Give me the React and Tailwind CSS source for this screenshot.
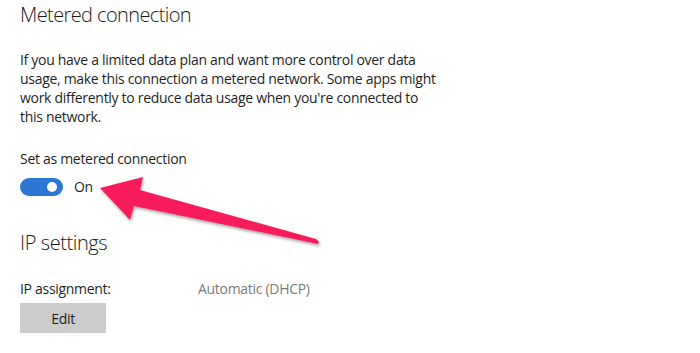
import React from "react";

// Windows 10 style settings pane: metered connection + IP settings, with a pink callout arrow.
const Arrow = () => (
  <svg className="absolute inset-0 pointer-events-none" width="700" height="353" viewBox="0 0 700 353">
    <defs>
      <filter id="sh" x="-10%" y="-20%" width="120%" height="160%">
        <feDropShadow dx="1" dy="2" stdDeviation="1.5" floodColor="#000" floodOpacity="0.35" />
      </filter>
    </defs>
    <path
      d="M100 188 L143 177 L140 190 L316 239 Q320 241 318 244 L134 206 L130 220 Z"
      fill="#f81d5b"
      filter="url(#sh)"
    />
  </svg>
);

export default function App() {
  return (
    <div className="relative w-[700px] h-[353px] bg-white overflow-hidden text-[#1f1f1f] font-['Open_Sans',sans-serif]">
      <div className="flex flex-col pl-5">
        <h1 className="mt-[1px] text-[20px] leading-[28px] font-light tracking-[-0.6px] text-[#1a1a1a]">Metered connection</h1>

        <p className="mt-[21px] text-[14px] leading-[19px] tracking-[-0.3px]">
          <span className="block">If you have a limited data plan and want more control over data</span>
          <span className="block">usage, make this connection a metered network. Some apps might</span>
          <span className="block">work differently to reduce data usage when you're connected to</span>
          <span className="block">this network.</span>
        </p>

        <div className="mt-[23px] text-[14px] leading-[19px] tracking-[-0.3px]">Set as metered connection</div>

        <div className="mt-[9px] flex items-center gap-[11px]">
          <div className="w-[43px] h-[18px] rounded-full bg-[#2b77d2] flex items-center justify-end pr-[6px]">
            <div className="w-[10px] h-[10px] rounded-full bg-white" />
          </div>
          <span className="text-[14px] leading-[19px] tracking-[-0.3px]">On</span>
        </div>

        <h2 className="mt-[33px] text-[20px] leading-[28px] font-light tracking-[-0.4px] text-[#1a1a1a]">IP settings</h2>

        <div className="mt-[22px] flex text-[14px] leading-[19px] tracking-[-0.3px]">
          <span className="w-[178px]">IP assignment:</span>
          <span className="text-[#7a7a7a]">Automatic (DHCP)</span>
        </div>

        <button className="mt-[5px] w-[86px] h-[30px] bg-[#cccccc] text-[14px] tracking-[-0.3px] flex items-center justify-center">
          Edit
        </button>
      </div>
      <Arrow />
    </div>
  );
}
